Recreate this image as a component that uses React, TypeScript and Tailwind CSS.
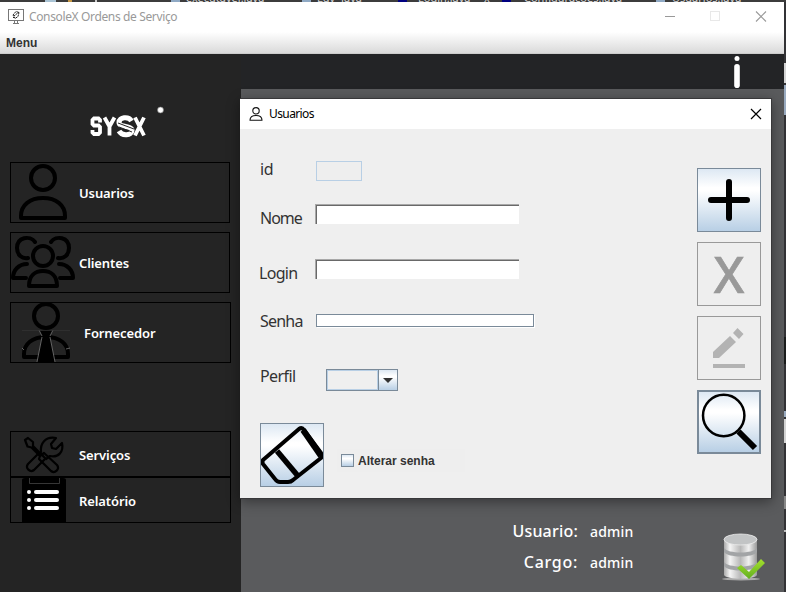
import React from "react";

const segoe = "font-['Noto_Sans','Open_Sans',sans-serif]";
const metal =
  "bg-[linear-gradient(to_bottom,#dde8f3_0%,#ffffff_30%,#ffffff_35%,#b8cfe5_100%)]";

function TopStrip() {
  return (
    <div className="relative h-[2px] w-full overflow-hidden bg-[#3c3c3c] font-['Noto_Sans',sans-serif] text-[11px] leading-[12px] text-[#d8d8d8]">
      <span className="absolute bottom-[-2px] left-[186px]">executavel.java</span>
      <span className="absolute bottom-[-2px] left-[317px]">Luv_Java</span>
      <span className="absolute bottom-[-2px] left-[418px]">Login.java</span>
      <span className="absolute bottom-[-2px] left-[484px]">x</span>
      <span className="absolute bottom-[-2px] left-[524px]">Configuracoes.java</span>
      <span className="absolute bottom-[-2px] left-[672px]">Usuarios.java</span>
      <i className="absolute left-[45px] top-0 h-full w-[11px] bg-[#a9c3d4]" />
      <i className="absolute left-[68px] top-0 h-full w-[4px] bg-[#c79845]" />
      <i className="absolute left-[95px] top-0 h-full w-[2px] bg-[#ccc]" />
      <i className="absolute left-[171px] top-0 h-full w-[9px] bg-[#8fa9c4]" />
      <i className="absolute left-[302px] top-0 h-full w-[9px] bg-[#8fa9c4]" />
      <i className="absolute left-[398px] top-0 h-full w-[9px] bg-[#000080]" />
      <i className="absolute left-[502px] top-0 h-full w-[9px] bg-[#000080]" />
      <i className="absolute left-[656px] top-0 h-full w-[9px] bg-[#8fa9c4]" />
    </div>
  );
}

function TitleBar() {
  return (
    <div className="flex h-[30px] items-center bg-white pl-2">
      <svg width="16" height="16" viewBox="0 0 16 16" fill="none" stroke="#777" className="shrink-0">
        <rect x="0.5" y="0.5" width="15" height="11" />
        <path d="M6.500 12v2M9.500 12v2M5 14.500h6" />
        <path d="M5 6l3-3.500 3 1-1 4-3 2zM6 7l5-4M5 9l1-1" stroke="#222" strokeDasharray="2 .6" />
      </svg>
      <span className={`ml-[5px] whitespace-nowrap text-[12px] tracking-[-0.36px] text-[#999] ${segoe}`}>
        ConsoleX Ordens de Serviço
      </span>
      <svg width="104" height="12" viewBox="0 0 104 12" fill="none" className="ml-auto mr-[16px] shrink-0">
        <path d="M1 5.500h10" stroke="#999" />
        <rect x="46.500" y="0.500" width="9" height="9" stroke="#e8e8e8" />
        <path d="M92 0.500l10 10M102 0.500l-10 10" stroke="#999" strokeWidth="1.100" />
      </svg>
    </div>
  );
}

function Logo() {
  return (
    <div className="ml-[90px] mt-[52px] h-[32px] w-[76px]">
      <svg width="76" height="32" viewBox="0 0 76 32" fill="none" stroke="#fff">
        <path d="M10 16.500V14L8.500 12.500H4L2.500 14V18L4 19.500H8.500L10 21V26.500L8.500 28H4L2.500 26.500V24" strokeWidth="3.800" />
        <path d="M14.500 11.500l5 9 5-9M19.500 20v9.500" strokeWidth="3.800" />
        <path d="M41.500 15c-3-5-12.500-4-12.500 1.500 0 5.500 13 2.500 13 8 0 5-10 6-13 .500" strokeWidth="5" />
        <path d="M28 17l16 6M29 21l13 5" stroke="#242424" strokeWidth="1" />
        <path d="M45 11.500l9 18M54 11.500l-9 18" strokeWidth="3.800" />
        <circle cx="70.500" cy="4" r="3" fill="#fff" stroke="#777" strokeWidth=".6" />
      </svg>
    </div>
  );
}

function UserIcon() {
  return (
    <svg width="68" height="59" viewBox="0 0 68 59" fill="none" stroke="#000" strokeWidth="4" strokeLinejoin="round">
      <circle cx="32" cy="15" r="12" />
      <path d="M10 55v-2c0-11 9-18 22-18s22 7 22 18v2z" />
    </svg>
  );
}

function GroupIcon() {
  return (
    <svg width="68" height="59" viewBox="0 0 68 59" fill="none" stroke="#000" strokeWidth="4" strokeLinecap="round" strokeLinejoin="round">
      <circle cx="32" cy="23" r="10" />
      <path d="M18 53c0-10 6-15 14-15s14 5 14 15z" />
      <path d="M24 9C19 2 6 4 6 15c0 7 5 11 11 10M40 9c5-7 18-5 18 6 0 7-5 11-11 10" />
      <path d="M16 31C8 31 2 37 2 45h13M48 31c8 0 14 6 14 14H49" />
    </svg>
  );
}

function SupplierIcon() {
  return (
    <svg width="73" height="59" viewBox="0 0 73 59" fill="none" stroke="#000" strokeWidth="4">
      <circle cx="35" cy="13" r="12" />
      <path d="M13 54v-3c0-10 8-17 22-17s22 7 22 17v3z" strokeLinejoin="round" />
      <path d="M28 27h14l-3 6h-8zM31 34h8l5 25H26z" fill="#000" stroke="none" />
      <path d="M31 34l-5 25M39 34l5 25M28 27l3 6M42 27l-3 6M11 45l2 2M55 46l4-1" stroke="#777" strokeWidth=".8" />
      <path d="M11 27.500h48" stroke="#353535" strokeWidth=".7" />
    </svg>
  );
}

function ToolsIcon() {
  return (
    <svg width="68" height="44" viewBox="0 0 68 44" fill="none" stroke="#000" strokeWidth="2.200" strokeLinejoin="round">
      <path d="M14 8l3-2 5 4v4l8 8-1.500 1.500-8-8-4-1z" />
      <path d="M27 22l-10 10c-3 4 2 9 6 6l11-11" />
      <path d="M30 20c-1-8 4-16 15-14l-5 6 1 4 4 1 6-6c2 9-4 15-12 13l-4 3-6-6z" />
      <path d="M29 24l4-3 13 12c3 4-2 9-6 6L28 27z" />
    </svg>
  );
}

function ReportIcon() {
  return (
    <svg width="68" height="44" viewBox="0 0 68 44" fill="none">
      <path d="M11 2q0-2 3-2h38q3 0 3 2v42H11z" fill="#000" />
      <path d="M18.500 0v5.500h30V0" stroke="#444" strokeWidth=".8" />
      <g fill="#fff">
        <circle cx="18" cy="14" r="2" /><circle cx="18" cy="22" r="2" /><circle cx="18" cy="30" r="2" />
        <rect x="23" y="12" width="25" height="4" rx="2" />
        <rect x="23" y="20" width="25" height="4" rx="2" />
        <rect x="23" y="28" width="25" height="4" rx="2" />
      </g>
    </svg>
  );
}

function NavButton({ icon, label, className }: { icon: React.ReactNode; label: string; className: string }) {
  return (
    <button className={`ml-[10px] flex shrink-0 items-center border border-black text-left text-[13px] font-semibold text-white ${segoe} ${className}`}>
      <span className="shrink-0">{icon}</span>
      <span className="pt-[3px] tracking-[-0.1px]">{label}</span>
    </button>
  );
}

function Sidebar() {
  return (
    <aside className="flex w-[241px] shrink-0 flex-col bg-[#242424]">
      <Logo />
      <NavButton className="mt-[24px] h-[61px] w-[220px]" icon={<UserIcon />} label="Usuarios" />
      <NavButton className="mt-[9px] h-[61px] w-[220px]" icon={<GroupIcon />} label="Clientes" />
      <NavButton className="mt-[9px] h-[61px] w-[221px]" icon={<SupplierIcon />} label="Fornecedor" />
      <NavButton className="mt-[68px] h-[46px] w-[221px]" icon={<ToolsIcon />} label="Serviços" />
      <NavButton className="h-[46px] w-[221px]" icon={<ReportIcon />} label="Relatório" />
    </aside>
  );
}

function Label({ children, className }: { children: string; className: string }) {
  return (
    <label className={`shrink-0 whitespace-nowrap text-[16px] leading-[20px] text-[#333] ${segoe} ${className}`}>
      {children}
    </label>
  );
}

function SunkenField() {
  return (
    <div className="h-[20px] w-[204px] border-l border-t border-[#a8a8a8]">
      <div className="h-full w-full border-l border-t border-[#696969] bg-white" />
    </div>
  );
}

function Form() {
  return (
    <div className="flex w-[320px] flex-col pl-[19px] pt-[26px]">
      <div className="flex h-[49px] items-start">
        <Label className="w-[57px] pl-[1px] pt-[4px] tracking-[-0.4px]">id</Label>
        <div className="mt-[6px] h-[20px] w-[46px] border border-[#b8cfe5] bg-[#eee]" />
      </div>
      <div className="flex h-[55px] items-start">
        <Label className="w-[56px] pl-[1px] pt-[4px] tracking-[-1px]">Nome</Label>
        <SunkenField />
      </div>
      <div className="flex h-[51px] items-start">
        <Label className="w-[56px] pt-[4px] tracking-[-0.700px]">Login</Label>
        <SunkenField />
      </div>
      <div className="flex h-[55px] items-start">
        <Label className="w-[57px] pl-[1px] pt-[1px] tracking-[-0.800px]">Senha</Label>
        <div className="mt-[4px] h-[13px] w-[218px] border border-[#7a8a99] bg-white shadow-[1px_1px_0_#fff]" />
      </div>
      <div className="flex h-[58px] items-start">
        <Label className="w-[67px] pl-[1px] pt-[1px] tracking-[-0.600px]">Perfil</Label>
        <div className="mt-[4px] flex h-[22px] w-[72px] border border-[#7a8a99]">
          <div className="w-[51px] border border-[#b8cfe5]" />
          <div className={`flex flex-1 items-center justify-center border-l border-[#7a8a99] ${metal}`}>
            <svg width="10" height="5" viewBox="0 0 10 5"><path d="M0 0h10L5 5z" fill="#333" /></svg>
          </div>
        </div>
      </div>
      <div className="flex items-start pl-[1px]">
        <ActionButton className={`border-[#7a8a99] ${metal}`}>
          <svg width="62" height="62" viewBox="0 0 62 62" fill="none" stroke="#000" strokeLinejoin="round">
            <path d="M2 36L38 5q3-2 5 1L60 29q2 3 0 5L32 56q-2 2-5 2h-8q-3 0-5-3L2 40q-1-2 0-4z" strokeWidth="4" />
            <path d="M16 27l21 25" strokeWidth="5.500" />
            <path d="M42 6l18 26" strokeWidth="6" />
          </svg>
        </ActionButton>
        <div className="ml-[13px] mt-[26px] flex h-[23px] w-[128px] shrink-0 items-center bg-[#eee] pl-[4px]">
          <div className={`h-[13px] w-[13px] border border-[#7a8a99] ${metal}`} />
          <span className="ml-[4px] whitespace-nowrap font-['Liberation_Sans',Arial,sans-serif] text-[12px] font-bold text-[#333]">
            Alterar senha
          </span>
        </div>
      </div>
    </div>
  );
}

function ActionButton({ children, className }: { children: React.ReactNode; className: string }) {
  return (
    <button className={`flex h-[64px] w-[64px] shrink-0 items-center justify-center overflow-hidden border ${className}`}>
      {children}
    </button>
  );
}

function Dialog() {
  return (
    <section className="absolute left-[240px] top-[98px] flex h-[401px] w-[532px] flex-col border-b border-r border-t border-[#38383a] bg-[#efefef] shadow-[0_3px_12px_rgba(0,0,0,0.4)]">
      <header className="flex h-[30px] shrink-0 items-center bg-white pl-[9px] pr-[9px]">
        <svg width="14" height="14" viewBox="0 0 14 14" fill="none" stroke="#111" strokeWidth="1.100">
          <circle cx="7" cy="3.800" r="3.200" />
          <path d="M1 13.300c0-3 2-4.800 6-4.800s6 1.800 6 4.800z" strokeLinejoin="round" />
        </svg>
        <span className={`ml-[6px] text-[12px] tracking-[-0.600px] text-black ${segoe}`}>Usuarios</span>
        <svg width="12" height="12" viewBox="0 0 12 12" className="mb-[1px] ml-auto" stroke="#000" strokeWidth="1.200">
          <path d="M1 1l10 10M11 1L1 11" />
        </svg>
      </header>
      <div className="flex flex-1 justify-between">
        <Form />
        <div className="flex flex-col gap-[10px] pr-[10px] pt-[39px]">
          <ActionButton className={`border-[#7a8a99] ${metal}`}>
            <svg width="62" height="62" viewBox="0 0 62 62" stroke="#000" strokeWidth="6" strokeLinecap="round">
              <path d="M31 13v36M13 31h36" />
            </svg>
          </ActionButton>
          <ActionButton className="border-[#999] bg-[#eee]">
            <span className={`text-[50px] font-medium leading-none text-[#999] [-webkit-text-stroke:0.7px_#999] ${segoe}`}>X</span>
          </ActionButton>
          <ActionButton className="border-[#999] bg-[#eee]">
            <svg width="62" height="62" viewBox="0 0 62 62" fill="#b3b3b3">
              <path d="M15 35l17-16 6 6-17 16h-6zM35 16l4.500-5 6 6-4.500 5zM15 47h32v4H15z" />
            </svg>
          </ActionButton>
          <ActionButton className={`border-2 border-[#7a8a99] ${metal}`}>
            <svg width="60" height="60" viewBox="0 0 60 60" className="shrink-0" fill="none" stroke="#000">
              <circle cx="24.700" cy="23.500" r="20.700" strokeWidth="2.500" />
              <path d="M39.500 39.500l16.500 16.500" strokeWidth="6" />
            </svg>
          </ActionButton>
        </div>
      </div>
    </section>
  );
}

function DatabaseIcon() {
  return (
    <svg width="46" height="48" viewBox="0 0 46 48" className="shrink-0">
      <defs>
        <linearGradient id="metalBody"><stop stopColor="#aaa" /><stop offset=".18" stopColor="#f5f5f5" /><stop offset=".5" stopColor="#b8b8b8" /><stop offset=".75" stopColor="#f0f0f0" /><stop offset="1" stopColor="#999" /></linearGradient>
        <linearGradient id="tick" x1="0" y1="0" x2="0" y2="1"><stop stopColor="#a4e02d" /><stop offset="1" stopColor="#62ae20" /></linearGradient>
      </defs>
      <ellipse cx="20" cy="46" rx="19" ry="1.500" fill="#aaa" />
      <path d="M3 6v36c3 5 30 5 33 0V6z" fill="url(#metalBody)" />
      <path d="M3 15c4 6 29 6 33 0v4c-4 6-29 6-33 0zM3 29c4 6 29 6 33 0v4c-4 6-29 6-33 0z" fill="#a2a4a6" />
      <ellipse cx="19.500" cy="6.500" rx="16.500" ry="5.500" fill="#c2c4c5" stroke="#eee" strokeWidth=".8" />
      <path d="M16 35l4-3 8 7 12-13 4 4-16 16z" fill="url(#tick)" />
    </svg>
  );
}

function StatusArea() {
  return (
    <div className={`mt-auto flex h-[94px] pl-[270px] pt-[18px] text-white ${segoe}`}>
      <div className="flex w-[67px] flex-col items-end text-[16px] leading-[31px]">
        <span className="whitespace-nowrap font-medium tracking-[0.200px]">Usuario:</span>
        <span className="whitespace-nowrap font-medium tracking-[0.700px]">Cargo:</span>
      </div>
      <div className="ml-[12px] flex flex-col text-[14px] font-medium leading-[31px] tracking-[0.200px]">
        <span>admin</span>
        <span>admin</span>
      </div>
      <div className="ml-auto mr-[17px] mt-[17px]">
        <DatabaseIcon />
      </div>
    </div>
  );
}

export default function App() {
  return (
    <div className="relative flex h-[592px] w-[786px] flex-col overflow-hidden bg-[#333]">
      <TopStrip />
      <div className="flex min-h-0 flex-1">
        <div className="flex w-[784px] flex-col">
          <TitleBar />
          <nav className="flex h-[22px] shrink-0 items-center border-b border-[#ccc] bg-gradient-to-b from-white to-[#dadada] pl-[6px] font-['Liberation_Sans',Arial,sans-serif] text-[12px] font-bold text-[#333]">
            Menu
          </nav>
          <div className="flex min-h-0 flex-1">
            <Sidebar />
            <main className="flex flex-1 flex-col bg-[#5a5b5d]">
              <div className="flex h-[35px] shrink-0 justify-end bg-[#232426] pr-[44px]">
                <svg width="6" height="35" viewBox="0 0 6 35" fill="#fff">
                  <circle cx="3" cy="4.500" r="2.500" />
                  <rect x=".2" y="10" width="5.600" height="24" rx="2.800" />
                </svg>
              </div>
              <StatusArea />
            </main>
          </div>
        </div>
        <div className="flex w-[2px] flex-col bg-[#333336]">
          <i className="mt-[61px] h-[20px] bg-[#d4d4d4]" />
          <i className="mt-[2px] h-[30px] bg-[#9aabc0]" />
          <i className="mt-[222px] h-[27px] bg-[#1b1d1d]" />
          <i className="mt-[47px] h-[6px] bg-[#9aabc0]" />
          <i className="mt-[2px] h-[24px] bg-[#d4d4d4]" />
          <i className="mt-[53px] h-[13px] bg-[#888]" />
          <i className="mt-[21px] h-[2px] bg-[#bbb]" />
        </div>
      </div>
      <Dialog />
    </div>
  );
}
